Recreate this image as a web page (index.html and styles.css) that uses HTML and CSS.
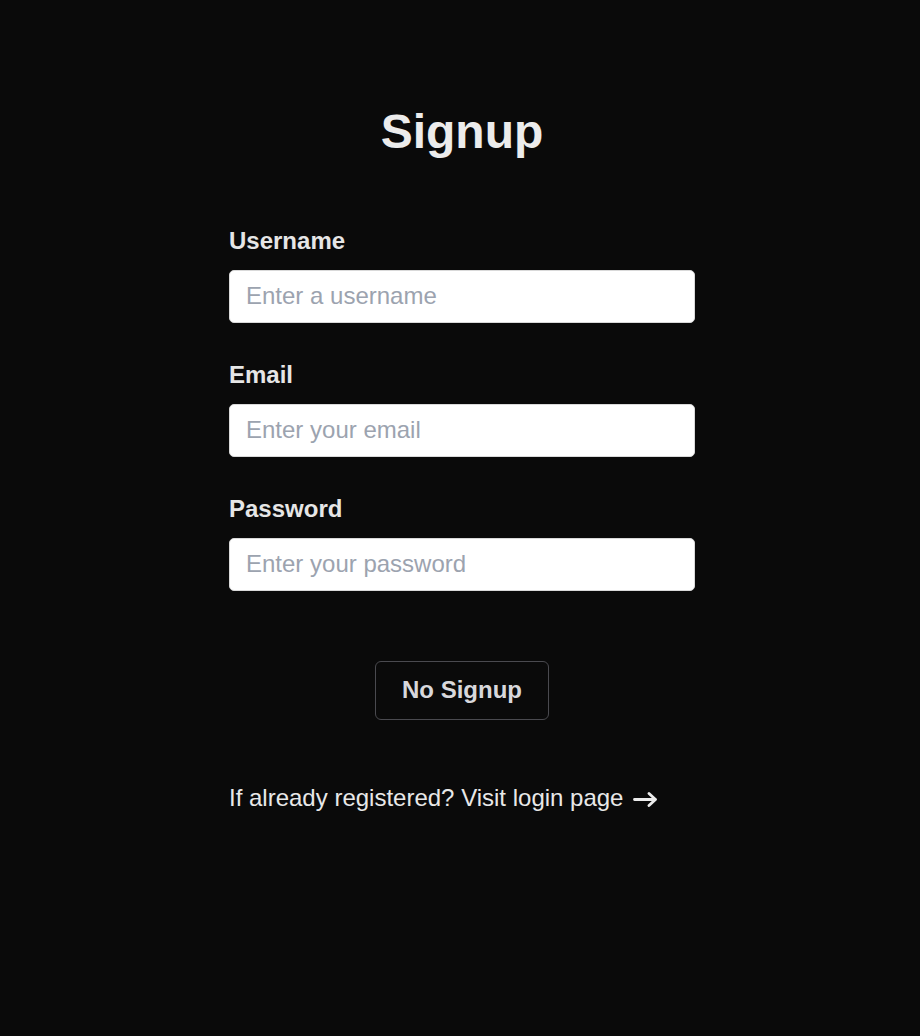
FILE: index.html
```html
<!DOCTYPE html>
<html lang="en">
<head>
<meta charset="utf-8">
<title>Signup</title>
<link rel="stylesheet" href="styles.css">
</head>
<body>
<main class="page">
  <section class="signup">
    <h1 class="title">Signup</h1>
    <form class="form">
      <div class="field">
        <label class="label" for="username">Username</label>
        <input class="input" id="username" type="text" placeholder="Enter a username">
      </div>
      <div class="field">
        <label class="label" for="email">Email</label>
        <input class="input" id="email" type="email" placeholder="Enter your email">
      </div>
      <div class="field">
        <label class="label" for="password">Password</label>
        <input class="input" id="password" type="password" placeholder="Enter your password">
      </div>
      <div class="actions">
        <button class="button" type="button">No Signup</button>
      </div>
    </form>
    <p class="login">If already registered? Visit login page<svg class="arrow" width="25" height="15" viewBox="0 0 25 15" aria-hidden="true"><path d="M1.5 7.5H22.5M16 1.5L22.5 7.5L16 13.5" fill="none" stroke="#ececec" stroke-width="2.8" stroke-linecap="round" stroke-linejoin="round"/></svg></p>
  </section>
</main>
</body>
</html>
```

FILE: styles.css
```css
html, body {
  margin: 0;
  padding: 0;
  background: #0a0a0a;
}

body {
  font-family: "Liberation Sans", Arial, sans-serif;
  color: #e8e8e8;
  min-height: 1036px;
}

.page {
  display: flex;
  justify-content: center;
  padding-left: 4px;
  padding-top: 104px;
}

.signup {
  width: 466px;
  display: flex;
  flex-direction: column;
}

.title {
  margin: 0;
  font-size: 48px;
  line-height: 56px;
  font-weight: 700;
  text-align: center;
  color: #ececec;
}

.form {
  display: flex;
  flex-direction: column;
  margin-top: 67px;
}

.field {
  display: flex;
  flex-direction: column;
  margin-bottom: 38px;
}

.label {
  font-size: 24px;
  line-height: 28px;
  font-weight: 700;
  color: #e6e6e6;
  margin-bottom: 15px;
}

.input {
  box-sizing: border-box;
  height: 53px;
  width: 100%;
  margin: 0;
  padding: 0 16px 1px;
  border: 1px solid #d9d9d9;
  border-radius: 5px;
  background: #ffffff;
  font-family: "Liberation Sans", Arial, sans-serif;
  font-size: 24px;
  color: #222;
  outline: none;
}

.input::placeholder {
  color: #9ca3af;
  opacity: 1;
}

.actions {
  display: flex;
  justify-content: center;
  margin-top: 32px;
}

.button {
  box-sizing: border-box;
  width: 174px;
  height: 59px;
  padding: 0 0 2px;
  border: 1px solid #4a4a4f;
  border-radius: 6px;
  background: #0a0a0a;
  color: #d8d8dc;
  font-family: "Liberation Sans", Arial, sans-serif;
  font-size: 24px;
  font-weight: 700;
  line-height: 24px;
  cursor: pointer;
}

.login {
  margin: 64px 0 0;
  font-size: 24px;
  line-height: 28px;
  color: #e8e8e8;
  display: flex;
  align-items: center;
}

.arrow {
  margin-left: 10px;
  margin-top: 2px;
  flex: none;
}
```
